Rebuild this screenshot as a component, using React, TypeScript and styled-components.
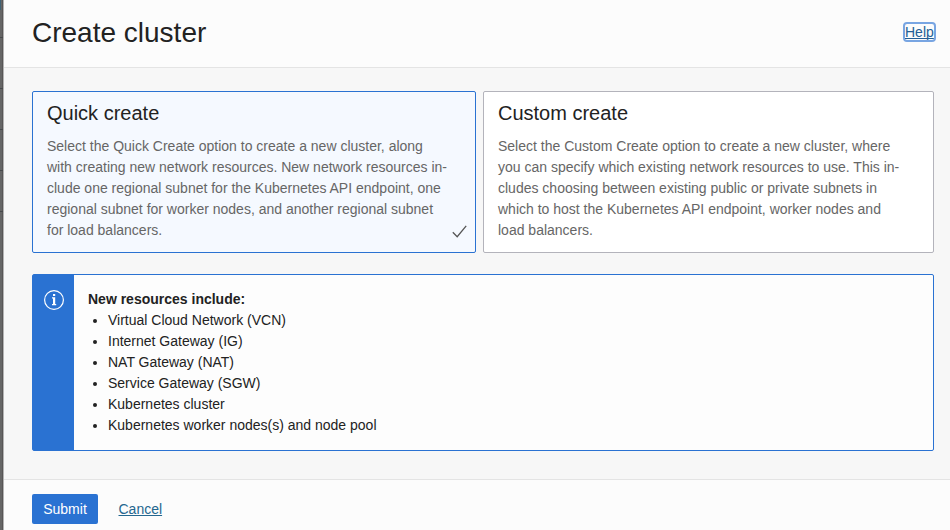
import React from 'react';
import styled, { createGlobalStyle } from 'styled-components';

const GlobalStyle = createGlobalStyle`
  * { box-sizing: border-box; }
  html, body { margin: 0; padding: 0; overflow: hidden; }
  body {
    font-family: "Liberation Sans", Arial, sans-serif;
    font-size: 14px;
    line-height: 21px;
    color: #222;
  }
`;

const Page = styled.div`
  display: flex;
  width: 950px;
  height: 530px;
  overflow: hidden;
`;

const Backdrop = styled.div`
  flex: 0 0 4px;
  display: flex;
  flex-direction: column;
  background: #666;
  border-right: 1px solid #b3b3b3;
  box-shadow: inset -1px 0 0 #585656;
`;

const BackdropRow = styled.div<{ $height: number; $accent?: boolean }>`
  flex: 0 0 ${(p) => p.$height}px;
  border-bottom: 1px solid #47494b;
  background: ${(p) =>
    p.$accent ? 'linear-gradient(#3f6173, #3f6173) 0 0 / 1px 10px no-repeat' : 'none'};
`;

const Panel = styled.main`
  flex: 1;
  min-width: 0;
  display: flex;
  flex-direction: column;
  background: #f7f7f7;
`;

const Header = styled.header`
  flex: 0 0 68px;
  display: flex;
  justify-content: space-between;
  padding: 0 14px 0 28px;
  background: #fcfcfc;
  border-bottom: 1px solid #e4e4e4;
`;

const Title = styled.h1`
  margin: 16px 0 0;
  font-size: 28px;
  font-weight: 400;
  line-height: 34px;
`;

const HelpLink = styled.a`
  align-self: flex-start;
  width: 33px;
  height: 20px;
  margin-top: 22px;
  border: 2px solid #78a5e2;
  border-radius: 4px;
  color: #245f95;
  line-height: 17px;
  white-space: nowrap;
  text-decoration: underline;
  text-decoration-skip-ink: none;
`;

const Content = styled.section`
  flex: 0 0 411px;
  padding: 23px 16px 0 28px;
`;

const Options = styled.div`
  display: grid;
  grid-template-columns: 444px 451px;
  column-gap: 7px;
`;

const OptionCard = styled.article<{ $selected?: boolean }>`
  position: relative;
  height: 162px;
  padding: 10px 14px;
  background: ${(p) => (p.$selected ? '#f5f9ff' : '#fff')};
  border: 1px solid ${(p) => (p.$selected ? '#2a72d2' : '#b3b3bb')};
  border-radius: 2px;
`;

const OptionTitle = styled.h2`
  margin: 0 0 11px;
  font-size: 20px;
  font-weight: 400;
  line-height: 23px;
`;

const OptionText = styled.p`
  margin: 0;
  color: #666;
  white-space: pre-line;
`;

const Check = styled.svg`
  position: absolute;
  right: 8px;
  bottom: 12px;
  width: 16px;
  height: 16px;
`;

const Notice = styled.section`
  display: flex;
  height: 177px;
  margin-top: 21px;
  background: #fdfdfd;
  border: 1px solid #2a72d2;
  border-radius: 2px;
`;

const NoticeIcon = styled.div`
  flex: 0 0 41px;
  padding: 14px 0 0 10px;
  background: #2a72d2;
`;

const NoticeBody = styled.div`
  padding: 14px;
`;

const ResourceList = styled.ul`
  margin: 0;
  padding-left: 20px;
`;

const Footer = styled.footer`
  flex: 1;
  display: flex;
  align-items: flex-start;
  gap: 20.5px;
  padding: 14px 28px 0;
  background: #fcfcfc;
  border-top: 1px solid #e4e4e4;
`;

const SubmitButton = styled.button`
  width: 66px;
  height: 30px;
  padding: 0;
  border: 0;
  border-radius: 2px;
  background: #2a72d2;
  color: #fff;
  font: inherit;
`;

const CancelLink = styled.a`
  line-height: 30px;
  color: #24678f;
  text-decoration: underline;
`;

const backdropRows = [38, 51, 41, 41, 41];

const quickText = `Select the Quick Create option to create a new cluster, along
with creating new network resources. New network resources in-
clude one regional subnet for the Kubernetes API endpoint, one
regional subnet for worker nodes, and another regional subnet
for load balancers.`;

const customText = `Select the Custom Create option to create a new cluster, where
you can specify which existing network resources to use. This in-
cludes choosing between existing public or private subnets in
which to host the Kubernetes API endpoint, worker nodes and
load balancers.`;

const resources = [
  'Virtual Cloud Network (VCN)',
  'Internet Gateway (IG)',
  'NAT Gateway (NAT)',
  'Service Gateway (SGW)',
  'Kubernetes cluster',
  'Kubernetes worker nodes(s) and node pool',
];

export default function App() {
  return (
    <Page>
      <GlobalStyle />
      <Backdrop>
        {backdropRows.map((height, i) => (
          <BackdropRow key={i} $height={height} $accent={i === 0} />
        ))}
      </Backdrop>
      <Panel>
        <Header>
          <Title>Create cluster</Title>
          <HelpLink>Help</HelpLink>
        </Header>
        <Content>
          <Options>
            <OptionCard $selected>
              <OptionTitle>Quick create</OptionTitle>
              <OptionText>{quickText}</OptionText>
              <Check viewBox="0 0 16 16" fill="none" stroke="#555" strokeWidth="1.3">
                <path d="M1.8 8.3 6.2 12.7 15.2 1.8" />
              </Check>
            </OptionCard>
            <OptionCard>
              <OptionTitle>Custom create</OptionTitle>
              <OptionText>{customText}</OptionText>
            </OptionCard>
          </Options>
          <Notice>
            <NoticeIcon>
              <svg width="22" height="22" viewBox="0 0 22 22" fill="none">
                <circle cx="11" cy="11" r="9.4" stroke="#fff" strokeWidth="1.2" />
                <path d="M10 5h2.2v2.1H10zM9 8.3h3.2v6.8h1v1.1H9v-1.1h1V9.4H9z" fill="#fff" />
              </svg>
            </NoticeIcon>
            <NoticeBody>
              <strong>New resources include:</strong>
              <ResourceList>
                {resources.map((name) => (
                  <li key={name}>{name}</li>
                ))}
              </ResourceList>
            </NoticeBody>
          </Notice>
        </Content>
        <Footer>
          <SubmitButton>Submit</SubmitButton>
          <CancelLink>Cancel</CancelLink>
        </Footer>
      </Panel>
    </Page>
  );
}
